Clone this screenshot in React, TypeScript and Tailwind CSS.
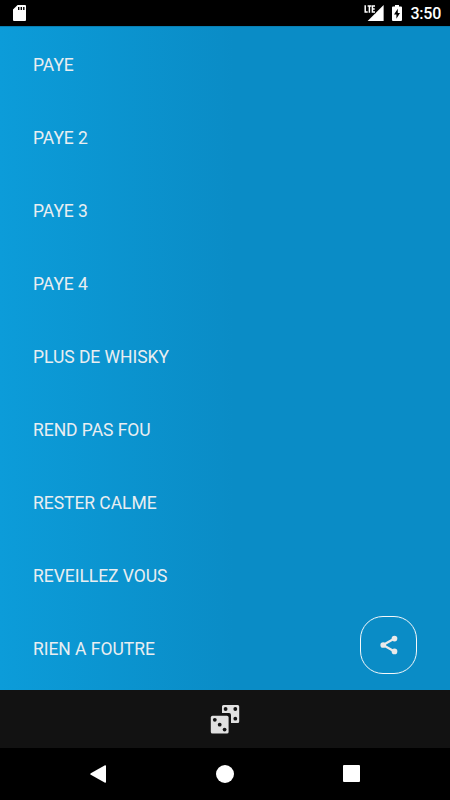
const sounds = [
  'PAYE',
  'PAYE 2',
  'PAYE 3',
  'PAYE 4',
  'PLUS DE WHISKY',
  'REND PAS FOU',
  'RESTER CALME',
  'REVEILLEZ VOUS',
  'RIEN A FOUTRE',
];

const StatusBar = () => (
  <header className="flex h-[26px] shrink-0 items-center justify-between bg-black pr-[9px] pl-[13px] text-white">
    <svg className="h-4 w-[13px]" viewBox="0 0 13 16">
      <path fill="currentColor" d="M4.6 0H12a1 1 0 0 1 1 1v14a1 1 0 0 1-1 1H1a1 1 0 0 1-1-1V4.6z" />
      <path fill="#000" d="M5 2h1.4v3H5zM7.6 2H9v3H7.6zM10.1 2h1.4v3h-1.4z" />
    </svg>

    <div className="flex items-center">
      {/* Signal strength */}
      <svg className="h-4 w-5" viewBox="0 0 20 16">
        <path fill="currentColor" d="M19.6 0v16h-16z" />
        <path fill="#000" d="M0 0h11.6v8.3H0z" />
        <path
          fill="none"
          stroke="currentColor"
          strokeWidth="1.5"
          d="M1.2.2v6.9h2.5M3.6.9h3.7M5.4.9v6.9M11 .9H8.4v6.200H11M8.400 4h2.300"
        />
      </svg>
      {/* Battery */}
      <svg className="ml-2 h-4 w-[10px]" viewBox="0 0 10 16">
        <path fill="currentColor" d="M3 0h4v1.6h2a1 1 0 0 1 1 1V15a1 1 0 0 1-1 1H1a1 1 0 0 1-1-1V2.6a1 1 0 0 1 1-1h2z" />
        <path fill="#000" d="M5.8 3.7 2 9.5h2.4v4.3L8 8H5.8z" />
      </svg>
      <span className="mt-0.5 ml-[9px] text-[16px] leading-none font-medium tracking-[-0.25px]">3:50</span>
    </div>
  </header>
);

const ShareButton = () => (
  <button
    aria-label="share"
    className="absolute right-[33px] bottom-4 flex h-[58px] w-[57px] items-center justify-center rounded-[23px] border border-[#f4f8fa] bg-[#0a8cc6] text-[#e9e9e9]"
  >
    <svg className="h-[22px] w-[22px]" viewBox="0 0 24 24" fill="currentColor">
      <path d="M5.500 12 18 4.900M5.500 12 18 19.100" fill="none" stroke="currentColor" strokeWidth="2.400" />
      <circle cx="5.700" cy="12" r="3.100" />
      <circle cx="18" cy="5" r="3.100" />
      <circle cx="18" cy="19" r="3.100" />
    </svg>
  </button>
);

const DiceTab = () => (
  <nav className="flex h-[58px] shrink-0 items-center justify-center bg-[#121212]">
    <svg className="h-[30px] w-[30px]" viewBox="0 0 30 30">
      <path
        fill="#e0e0e0"
        d="M13.500 1h14.200a1.500 1.500 0 0 1 1.500 1.500v15a1.500 1.500 0 0 1-1.500 1.500H21V11a2 2 0 0 0-2-2h-7V2.500A1.500 1.500 0 0 1 13.500 1z"
      />
      <rect x="0.800" y="11.800" width="17.800" height="17.800" rx="1.700" fill="#e0e0e0" />
      <g fill="#121212">
        <circle cx="15.600" cy="5" r="1.900" />
        <circle cx="25.300" cy="5" r="1.900" />
        <circle cx="25.300" cy="14.700" r="1.900" />
        <circle cx="4.800" cy="15.800" r="1.900" />
        <circle cx="9.700" cy="20.700" r="1.900" />
        <circle cx="14.600" cy="25.600" r="1.900" />
      </g>
    </svg>
  </nav>
);

const NavigationBar = () => (
  <footer className="flex h-[52px] shrink-0 items-center justify-between bg-black px-[90px] text-white">
    <svg className="h-[18px] w-4" viewBox="0 0 16 18" fill="currentColor">
      <path d="M15 .2a.8.8 0 0 1 1 .7v16.200a.8.8 0 0 1-1 .7L.8 9.800a1 1 0 0 1 0-1.600z" />
    </svg>
    <div className="h-[18px] w-[18px] rounded-full bg-white" />
    <div className="mb-px h-[17px] w-[17px] rounded-[1px] bg-white" />
  </footer>
);

export default function App() {
  return (
    <div className="flex h-[800px] w-[450px] flex-col overflow-hidden font-[Roboto,sans-serif]">
      <StatusBar />
      <main className="relative h-[664px] overflow-hidden border-t border-[#087fb3] bg-linear-to-r from-[#0c9cd9] to-[#0a8cc6] to-52%">
        <ul className="pt-0.5">
          {sounds.map((sound) => (
            <li
              key={sound}
              className="flex h-[73px] items-center pl-[33px] text-[17.5px] tracking-[-0.04px] text-[#e9eef1]"
            >
              {sound}
            </li>
          ))}
        </ul>
        <ShareButton />
      </main>
      <DiceTab />
      <NavigationBar />
    </div>
  );
}
